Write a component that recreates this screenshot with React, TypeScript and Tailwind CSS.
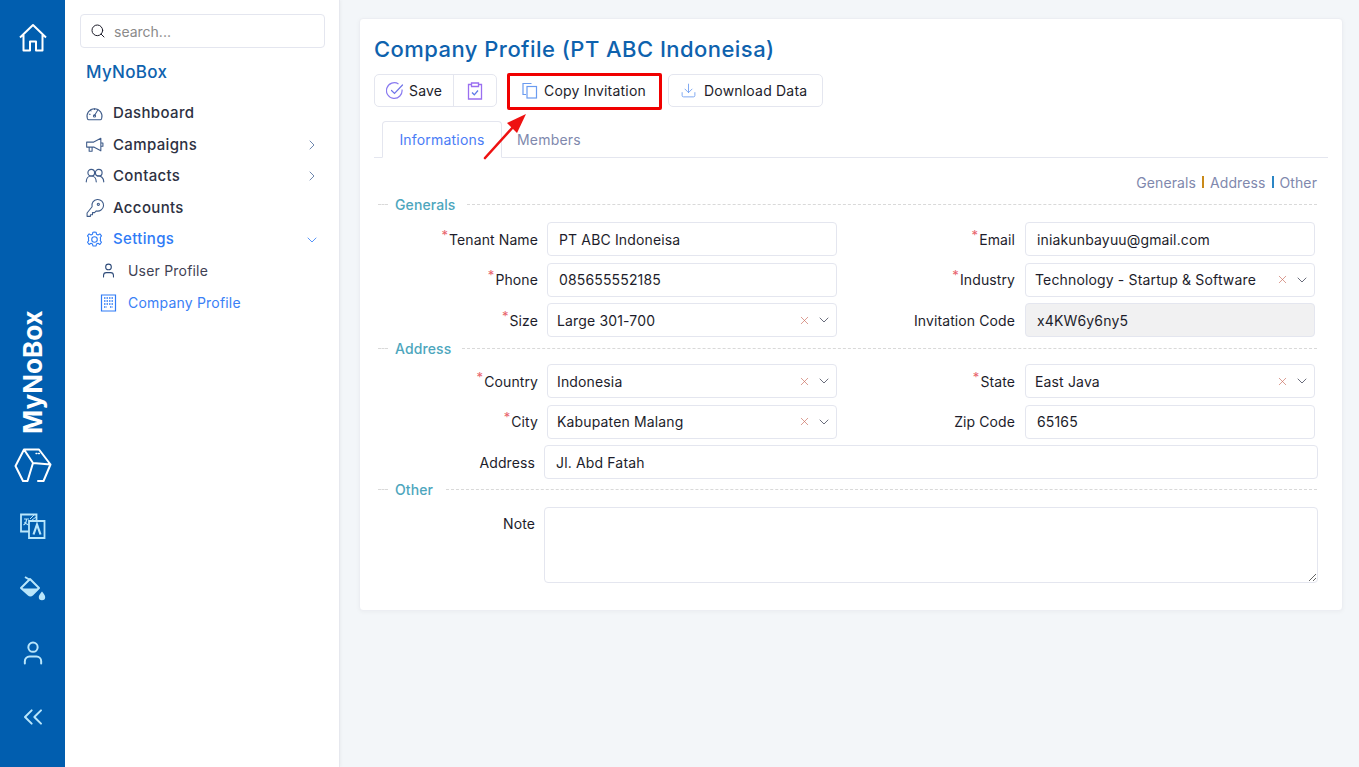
import React from "react";
import { ChevronRight, ChevronDown, Search, X, ChevronsLeft, User, Download } from "lucide-react";

const font = "font-['Inter','Liberation_Sans',sans-serif]";

function SvgI({ children, size = 20, cls = "", sw = 1.3, vb = 24 }: { children: React.ReactNode; size?: number; cls?: string; sw?: number; vb?: number }) {
  return (
    <svg width={size} height={size} viewBox={`0 0 ${vb} ${vb}`} fill="none" stroke="currentColor" strokeWidth={sw} strokeLinecap="round" strokeLinejoin="round" className={cls}>
      {children}
    </svg>
  );
}

function Req() {
  return <span className="text-[#e8636b] text-[13px] leading-none relative top-[-5px] mr-[1px]">*</span>;
}

function Divider({ label, w }: { label: string; w: string }) {
  return (
    <div className="flex items-center h-[18px] pl-[4px] pr-[11px]">
      <div className="w-[10px] border-t border-dashed border-[#d9d9d9]" />
      <div className={`pl-[7px] text-[#4da6bd] text-[14px] tracking-[0.1px] font-medium ${w}`}>{label}</div>
      <div className="flex-1 border-t border-dashed border-[#d9d9d9]" />
    </div>
  );
}

function TextBox({ value, disabled }: { value: string; disabled?: boolean }) {
  return (
    <input
      readOnly
      value={value}
      className={`w-[290px] h-[34px] px-[11px] rounded-[4px] border border-[#e4e6ef] text-[14px] tracking-[0.15px] text-[#1d1d2b] outline-none ${disabled ? "bg-[#f1f1f2]" : "bg-white"}`}
    />
  );
}

function SelectBox({ value }: { value: string }) {
  return (
    <div className="w-[290px] h-[34px] pl-[9px] pr-[3px] rounded-[4px] border border-[#e4e6ef] bg-white flex items-center text-[14px] tracking-[0.15px] text-[#1d1d2b]">
      <span className="flex-1 truncate">{value}</span>
      <X size={13} strokeWidth={1.2} className="text-[#c8695a] mr-[5px]" />
      <ChevronDown size={16} strokeWidth={1.2} className="text-[#44475a] mr-[1px]" />
    </div>
  );
}

function Field({ label, req, w, children }: { label: string; req?: boolean; w: string; children: React.ReactNode }) {
  return (
    <div className="flex items-center">
      <div className={`${w} shrink-0 text-right text-[14px] tracking-[0.1px] text-[#1d1d2b]`}>
        {req && <Req />}
        {label}
      </div>
      {children}
    </div>
  );
}

function Row({ children }: { children: React.ReactNode }) {
  return <div className="flex h-[34px]">{children}</div>;
}

function NavItem({ icon, label, active, chev }: { icon: React.ReactNode; label: string; active?: boolean; chev?: "r" | "d" }) {
  return (
    <div className={`flex items-center h-[31.6px] pl-[20px] pr-[19px] ${active ? "text-[#2f7bf6]" : "text-[#2d3142]"}`}>
      <div className={`w-[28px] shrink-0 ${active ? "text-[#2f7bf6]" : "text-[#3f5c8a]"}`}>{icon}</div>
      <span className="flex-1 text-[15px] tracking-[0.35px] font-medium">{label}</span>
      {chev === "r" && <ChevronRight size={16} strokeWidth={1.2} className="text-[#4a6a9a]" />}
      {chev === "d" && <ChevronDown size={16} strokeWidth={1.2} className="text-[#2f7bf6]" />}
    </div>
  );
}

export default function App() {
  return (
    <div className={`${font} flex w-full h-[767px] overflow-hidden bg-[#f3f6f9]`}>
      {/* Rail */}
      <aside className="w-[65px] shrink-0 bg-[#015eaf] flex flex-col items-center text-white">
        <svg width="30" height="30" viewBox="0 0 30 30" fill="none" stroke="currentColor" strokeWidth="2" strokeLinejoin="round" className="mt-[23px] ml-[1px]">
          <path d="M2 14.5 15 2l13 12.5M5.5 12v15.5h6.5v-9h6v9h6.5V12" />
        </svg>
        <div className="mt-[253px] h-[132px] flex items-center justify-center [writing-mode:vertical-rl] rotate-180 text-[26px] font-bold leading-none tracking-[0px]">
          MyNoBox
        </div>
        <svg width="38" height="36" viewBox="0 0 38 36" fill="none" stroke="currentColor" strokeWidth="2" strokeLinejoin="round" strokeLinecap="round" className="mt-[10px]">
          <path d="M10 1.5h15l11.5 15-7 16.5H24M13 33H9L1.5 18 10 1.5M10 1.5 19 15l17.5 1.5M19 15 13.5 33" />
          <path d="M22 5.5h5" strokeDasharray="1 1.5" strokeWidth="1.3" />
        </svg>
        <svg width="26" height="26" viewBox="0 0 26 26" fill="none" stroke="#b9e6fb" strokeWidth="1.8" className="mt-[29px]">
          <path d="M1 1.5h15.5v17H1z" />
          <path d="M9 8h15.5v17H9z" fill="#015eaf" />
          <path d="M4 6h5M6.5 6c0 3-1.2 5-3 6M4.5 9c1 1.5 2.5 2.4 4 3" strokeWidth="1.2" />
          <path d="M13.5 21.5 17 11.5l3.5 10" strokeWidth="2.2" />
          <path d="M10 6 15 1M9.5 9 16 4" strokeWidth="1" />
        </svg>
        <svg width="28" height="28" viewBox="0 0 28 28" className="mt-[37px] ml-[1px]">
          <path d="M2 12 11 3l9 9-6.5 6.5a3 3 0 0 1-4.2 0z" fill="none" stroke="#b9e6fb" strokeWidth="2" strokeLinejoin="round" />
          <path d="M3.5 12.5h16l-6 6a3 3 0 0 1-4.3 0z" fill="#b9e6fb" />
          <path d="M6 1l5 3" stroke="#b9e6fb" strokeWidth="2" />
          <path d="M23 15.5c1.7 2.3 3.2 3.6 3.2 5.6a3.2 3.2 0 0 1-6.4 0c0-2 1.5-3.3 3.2-5.6z" fill="#b9e6fb" />
        </svg>
        <User size={28} strokeWidth={1.7} className="text-[#b9e6fb] mt-[35px]" />
        <ChevronsLeft size={32} strokeWidth={1.5} className="text-[#b9e6fb] mt-[34px]" />
      </aside>

      {/* Sidebar */}
      <nav className="w-[275px] shrink-0 bg-white border-r border-[#e6e8ee] shadow-[1px_0_3px_rgba(0,0,0,0.04)] flex flex-col">
        <div className="mt-[14px] mx-[15px] h-[34px] w-[245px] rounded-[4px] border border-[#e4e6ef] flex items-center pl-[9px] text-[14px] text-[#8a8a8a]">
          <Search size={16} strokeWidth={1.5} className="text-[#1d1d2b] mr-[8px]" />
          search...
        </div>
        <div className="mt-[12px] pl-[21px] text-[#0e62ae] text-[17px] font-medium tracking-[0.3px]">MyNoBox</div>
        <div className="mt-[12px] flex flex-col">
          <NavItem
            label="Dashboard"
            icon={
              <SvgI size={19} sw={1.3}>
                <path d="M3 18.5A9.5 9.5 0 1 1 21 18.5a2 2 0 0 1-1.8 1.5H4.8A2 2 0 0 1 3 18.5z" />
                <path d="M12 14.5 16 8M12 6v1M7 8l.7.7M5.5 13h1" />
                <circle cx="12" cy="15" r="1.4" />
              </SvgI>
            }
          />
          <NavItem
            label="Campaigns"
            chev="r"
            icon={
              <SvgI size={20} sw={1.3}>
                <path d="M2 8.5h8.5L19 4v15l-8.5-4.5H2zM5 14.5v5h3.5v-5M19 9.5h2.5v4H19" />
              </SvgI>
            }
          />
          <NavItem
            label="Contacts"
            chev="r"
            icon={
              <SvgI size={20} sw={1.4}>
                <circle cx="7.5" cy="8" r="4" />
                <circle cx="16.5" cy="8" r="4" />
                <path d="M1.5 19c0-4 2.5-7 6-7s6 3 6 7M15 12c4-.7 7.5 2.5 7.5 7" />
              </SvgI>
            }
          />
          <NavItem
            label="Accounts"
            icon={
              <SvgI size={20} sw={1.3}>
                <path d="M8.5 10.5a7 7 0 1 1 5 5l-2 2h-2.5V20H6.5v2H2.5v-4z" />
                <circle cx="16" cy="7.5" r="1.3" />
              </SvgI>
            }
          />
          <NavItem
            label="Settings"
            active
            chev="d"
            icon={
              <SvgI size={19} sw={1.4}>
                <path d="M12 2.5l2 .3.6 2.6 1.8.8 2.4-1.3 2 2.6-1.5 2 .4 2-.4 2 1.5 2-2 2.7-2.4-1.4-1.8.8-.6 2.6h-4l-.6-2.6-1.8-.8-2.4 1.4-2-2.7 1.5-2-.4-2 .4-2-1.5-2 2-2.6 2.4 1.3 1.8-.8.6-2.6z" />
                <circle cx="12" cy="12" r="3.5" />
              </SvgI>
            }
          />
        </div>
        <div className="flex flex-col text-[14px] tracking-[0.2px]">
          <div className="flex items-center h-[31px] pl-[35px] text-[#3f4254]">
            <User size={17} strokeWidth={1.5} className="text-[#2d4a78] mr-[11px]" />
            User Profile
          </div>
          <div className="flex items-center h-[33px] pl-[35px] text-[#3a80f6]">
            <svg width="17" height="18" viewBox="0 0 17 18" fill="none" stroke="#2f7bf6" strokeWidth="1.2" className="mr-[11px]">
              <path d="M1.5 1h14v16h-14z" />
              <path d="M4 4h9M4 7h9M4 10h9M4 13h3M10 13h3" strokeDasharray="1.5 1" strokeWidth="1.6" />
            </svg>
            Company Profile
          </div>
        </div>
      </nav>

      {/* Main */}
      <main className="flex-1 pt-[18px] pl-[19px] pr-[16px]">
        <div className="h-[593px] rounded-[4px] bg-white border border-[#eceef3] shadow-[0_1px_4px_rgba(0,0,0,0.04)] pt-[14px] pl-[14px] pr-[14px]">
          <h1 className="text-[22px] leading-[32px] font-medium text-[#0e62ae] tracking-[0.45px]">Company Profile (PT ABC Indoneisa)</h1>

          {/* Toolbar */}
          <div className="mt-[9px] flex items-center h-[33px] text-[14px] text-[#1d1d2b] tracking-[0.2px]">
            <div className="flex h-[33px] w-[123px] rounded-[5px] border border-[#e4e6ef]">
              <div className="w-[79px] flex items-center pl-[11px] border-r border-[#e4e6ef]">
                <svg width="18" height="18" viewBox="0 0 18 18" fill="none" stroke="#8a7bf0" strokeWidth="1.2" className="mr-[5px]">
                  <path d="M16 7.5A7.8 7.8 0 1 1 12.5 2" />
                  <path d="M5.5 8.5 8.5 11.5 16.5 3" stroke="#6f74e8" strokeLinecap="round" />
                </svg>
                Save
              </div>
              <div className="flex-1 flex items-center justify-center">
                <svg width="16" height="18" viewBox="0 0 16 18" fill="none" stroke="#9a6ff0" strokeWidth="1.3">
                  <path d="M4 2.5H1.5v14.5h13V2.5H12M4.5 1h7v3.5h-7z" />
                  <path d="M5 10.5 7.3 12.8 11 8.5" stroke="#5f7be8" />
                </svg>
              </div>
            </div>

            <div className="relative ml-[11px] h-[33px] w-[153px] flex items-center pl-[12px] border border-transparent">
              <svg width="17" height="17" viewBox="0 0 17 17" fill="none" stroke="#6a9bf0" strokeWidth="1.2" className="mr-[6px]">
                <path d="M10.5 1.5h-8.5v11h3" />
                <rect x="6" y="4.5" width="9.5" height="11.5" />
              </svg>
              Copy Invitation
              <div className="absolute left-[-2px] top-[-2px] w-[155px] h-[37px] border-[3px] border-[#f00000] rounded-[2px]" />
              <svg width="50" height="50" viewBox="0 0 50 50" className="absolute left-[-27px] top-[35px]">
                <path d="M3 48 L32 16" stroke="#ee1111" strokeWidth="2.6" strokeLinecap="round" />
                <path d="M44 4 L25 13 L35 23 Z" fill="#ee1111" />
              </svg>
            </div>

            <div className="ml-[7px] h-[33px] w-[155px] rounded-[5px] border border-[#e4e6ef] flex items-center pl-[11px]">
              <Download size={17} strokeWidth={1.2} className="text-[#6a9bf0] mr-[7px]" />
              Download Data
            </div>
          </div>

          {/* Tabs */}
          <div className="mt-[14px] flex h-[37px] border-b border-[#e4e6ef] text-[14px] tracking-[0.2px]">
            <div className="ml-[8px] w-[120px] h-[37px] rounded-t-[4px] border border-[#e4e6ef] border-b-white bg-white flex items-center justify-center text-[#4a7cf6]">
              Informations
            </div>
            <div className="ml-[15px] flex items-center text-[#8088ad]">Members</div>
          </div>

          {/* Anchors */}
          <div className="mt-[15px] h-[18px] pr-[11px] flex items-center justify-end text-[14px] tracking-[0.1px] text-[#8088ad]">
            Generals
            <span className="mx-[6px] w-[2px] h-[12px] bg-[#c98a1a]" />
            Address
            <span className="mx-[6px] w-[2px] h-[12px] bg-[#2b86c5]" />
            Other
          </div>

          <div className="mt-[4px]">
            <Divider label="Generals" w="pr-[11px]" />
            <div className="mt-[9px] flex flex-col gap-[6.5px]">
              <Row>
                <Field label="Tenant Name" req w="w-[164px] pr-0 mr-[9px]"><TextBox value="PT ABC Indoneisa" /></Field>
                <Field label="Email" req w="w-[178px] mr-[10px]"><TextBox value="iniakunbayuu@gmail.com" /></Field>
              </Row>
              <Row>
                <Field label="Phone" req w="w-[164px] mr-[9px]"><TextBox value="085655552185" /></Field>
                <Field label="Industry" req w="w-[178px] mr-[10px]"><SelectBox value="Technology - Startup & Software" /></Field>
              </Row>
              <Row>
                <Field label="Size" req w="w-[164px] mr-[9px]"><SelectBox value="Large 301-700" /></Field>
                <Field label="Invitation Code" w="w-[178px] mr-[10px]"><TextBox disabled value="x4KW6y6ny5" /></Field>
              </Row>
            </div>
            <div className="mt-[2px]">
              <Divider label="Address" w="pr-[11px]" />
            </div>
            <div className="mt-[7px] flex flex-col gap-[6.5px]">
              <Row>
                <Field label="Country" req w="w-[164px] mr-[9px]"><SelectBox value="Indonesia" /></Field>
                <Field label="State" req w="w-[178px] mr-[10px]"><SelectBox value="East Java" /></Field>
              </Row>
              <Row>
                <Field label="City" req w="w-[164px] mr-[9px]"><SelectBox value="Kabupaten Malang" /></Field>
                <Field label="Zip Code" w="w-[178px] mr-[10px]"><TextBox value="65165" /></Field>
              </Row>
              <Row>
                <Field label="Address" w="w-[161px] mr-[9px]">
                  <input readOnly value="Jl. Abd Fatah" className="w-[774px] h-[34px] px-[11px] rounded-[4px] border border-[#e4e6ef] text-[14px] tracking-[0.15px] text-[#1d1d2b] outline-none" />
                </Field>
              </Row>
            </div>
            <div className="mt-[1px]">
              <Divider label="Other" w="pr-[13px]" />
            </div>
            <div className="mt-[9px] flex items-start">
              <div className="w-[161px] mr-[9px] pt-[6px] text-right text-[14px] tracking-[0.1px] text-[#1d1d2b]">Note</div>
              <textarea readOnly className="w-[774px] h-[76px] block rounded-[4px] border border-[#e4e6ef] outline-none" />
            </div>
          </div>
        </div>
      </main>
    </div>
  );
}
